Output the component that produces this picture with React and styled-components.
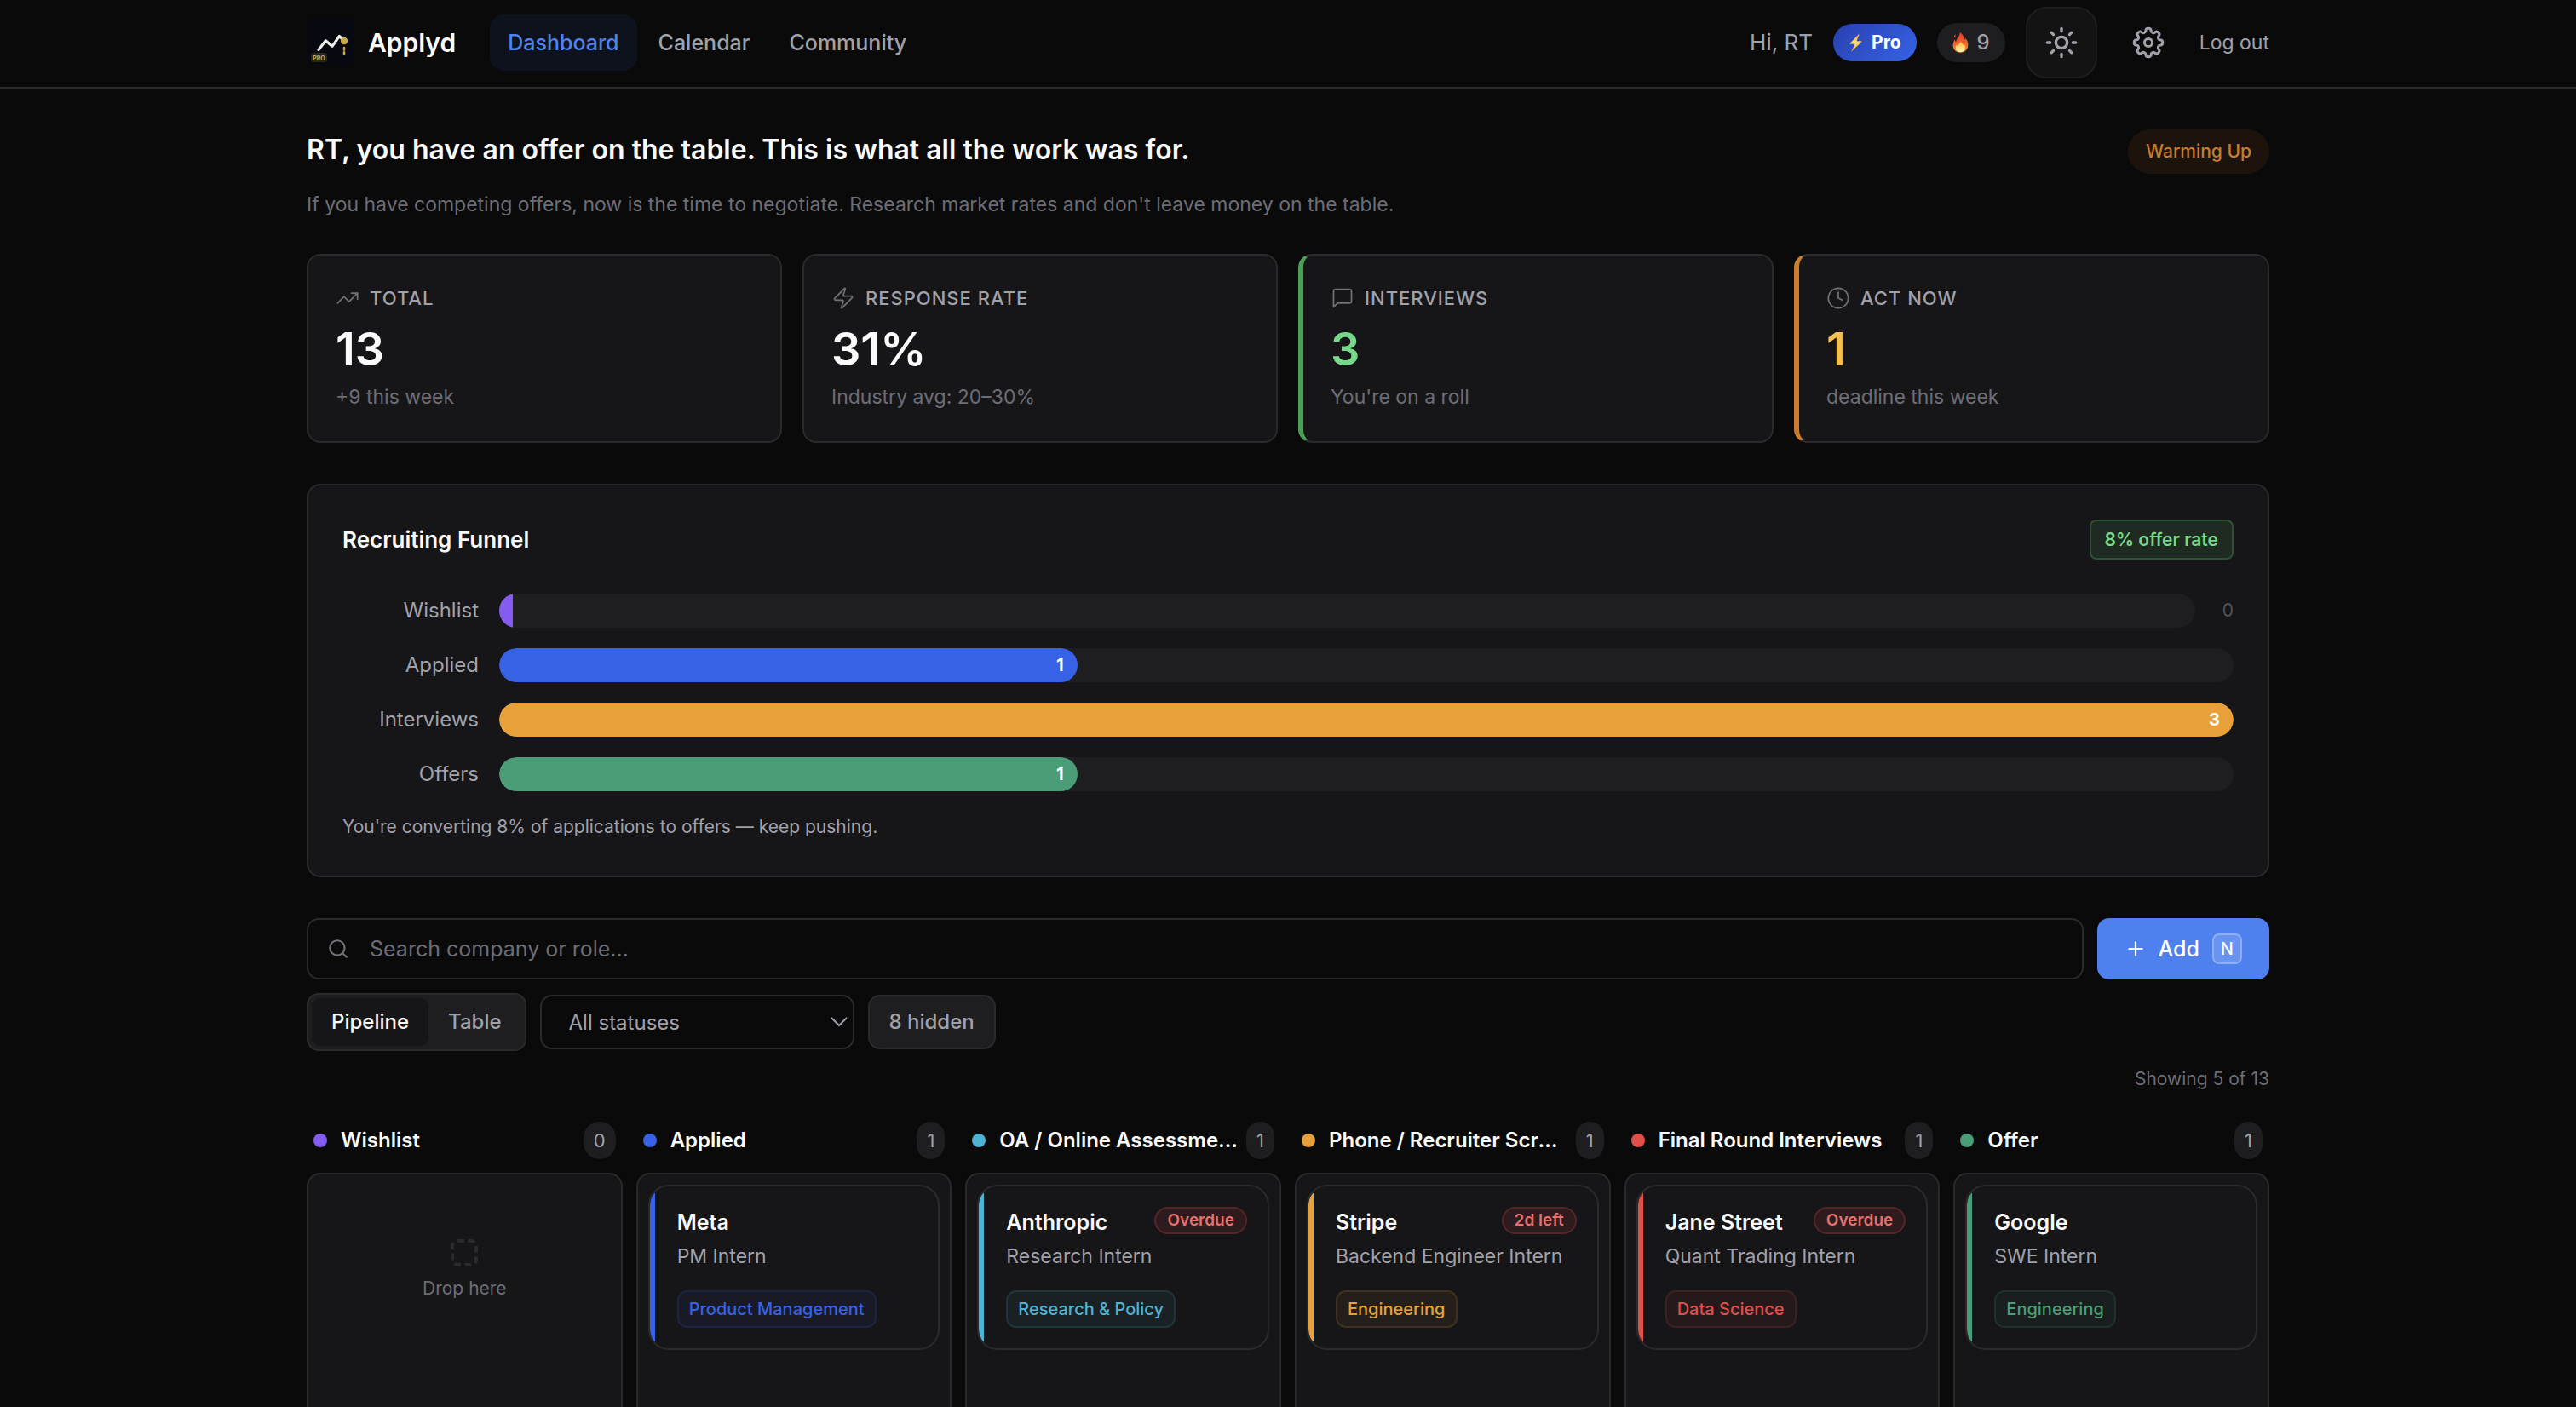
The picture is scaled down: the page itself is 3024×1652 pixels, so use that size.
import React, { useState } from 'react';
import styled, { createGlobalStyle, css } from 'styled-components'
import { Sun, TrendingUp, Zap, Clock, Plus, Search } from 'lucide-react'
import { FiMessageSquare } from 'react-icons/fi'

const GlobalStyle = createGlobalStyle`
    * {
        box-sizing: border-box;
    }

    body {
        margin: 0;
        background: #0a0a0a;
        color: #fafafa;
        font-family: Inter, "Liberation Sans", sans-serif;
        font-size: 24px;
        line-height: 32px;
        overflow-x: hidden;
        scrollbar-width: none;
    }

    button, input, select {
        font-family: inherit;
        margin: 0;
    }

    h1, h2, h3, p, ul {
        margin: 0;
        padding: 0;
    }
`

const Container = styled.div`
    max-width: 2400px;
    margin: 0 auto;
    padding: 0 48px;
`

const Header = styled.header`
    border-bottom: 2px solid #2a2a2c;
`

const HeaderInner = styled(Container)`
    display: flex;
    align-items: center;
    justify-content: space-between;
    padding-top: 8px;
    padding-bottom: 10px;
`

const HeaderGroup = styled.div`
    display: flex;
    align-items: center;
    gap: ${props => props.$gap}px;
`

const Brand = styled.a`
    display: flex;
    align-items: center;
    gap: 16px;
    color: #fafafa;
    font-size: 30px;
    font-weight: 600;
    text-decoration: none;
`

const Nav = styled.nav`
    display: flex;
    gap: 4px;
`

const NavLink = styled.a`
    padding: 17px 21px;
    border-radius: 16px;
    font-size: 25px;
    font-weight: 500;
    text-decoration: none;
    color: ${props => props.$active ? '#4f83ee' : '#a1a1aa'};
    background: ${props => props.$active ? '#0d121d' : 'transparent'};
`

const Greeting = styled.span`
    font-size: 26px;
    color: #a1a1aa;
`

const pill = css`
    display: inline-flex;
    align-items: center;
    border-radius: 999px;
    white-space: nowrap;
`

const ProBadge = styled.span`
    ${pill}
    gap: 10px;
    padding: 6px 18px;
    background: linear-gradient(135deg, #2940b0, #3663e6);
    color: #fff;
    font-size: 21px;
    font-weight: 700;
`

const Streak = styled.span`
    ${pill}
    gap: 10px;
    padding: 7px 18px;
    background: #1e1e20;
    color: #a1a1aa;
    font-size: 24px;
    font-weight: 500;
`

const IconButton = styled.button`
    display: flex;
    align-items: center;
    justify-content: center;
    padding: ${props => props.$framed ? '20px' : '16px'};
    border: ${props => props.$framed ? '2px solid #1e1e20' : '0'};
    border-radius: 24px;
    background: ${props => props.$framed ? '#131314' : 'transparent'};
    color: #a1a1aa;
    cursor: pointer;
`

const LogOut = styled.button`
    padding: 0;
    border: 0;
    background: none;
    color: #a1a1aa;
    font-size: 23px;
    line-height: 32px;
    cursor: pointer;
`

const Main = styled(Container).attrs({ as: 'main' })`
    padding-top: 48px;
`

const Intro = styled.section`
    display: flex;
    align-items: flex-start;
    justify-content: space-between;
    margin-bottom: 42px;
`

const Headline = styled.h1`
    margin-bottom: 24px;
    font-size: 32px;
    font-weight: 600;
    line-height: 48px;
`

const Advice = styled.p`
    font-size: 23px;
    color: #6d6d75;
`

const Momentum = styled.span`
    ${pill}
    padding: 10px 21px;
    background: #1c140c;
    color: #c97b2e;
    font-size: 21px;
    font-weight: 500;
`

const Stats = styled.section`
    display: grid;
    grid-template-columns: repeat(4, 1fr);
    gap: 24px;
    margin-bottom: 48px;
`

const StatCard = styled.article`
    padding: 34px 32px 36px;
    border: 2px solid #2a2a2c;
    border-radius: 16px;
    background: #161618;
    ${props => props.$accent && css`
        border-left: 6px solid ${props.$accent};
    `}
`

const StatLabel = styled.h2`
    display: flex;
    align-items: center;
    gap: 12px;
    color: #a1a1aa;
    font-size: 22px;
    font-weight: 500;
    letter-spacing: 1px;
    text-transform: uppercase;

    svg {
        color: #71717a;
    }
`

const StatValue = styled.p`
    margin: 12px 0 8px;
    color: ${props => props.$color || '#fafafa'};
    font-size: 54px;
    font-weight: 600;
    line-height: 64px;
`

const StatNote = styled.p`
    color: #6d6d75;
    font-size: 23px;
`

const FunnelCard = styled.section`
    margin-bottom: 48px;
    padding: 40px;
    border: 2px solid #2a2a2c;
    border-radius: 16px;
    background: #161618;
`

const FunnelHead = styled.div`
    display: flex;
    align-items: center;
    justify-content: space-between;
    margin-bottom: 40px;
`

const FunnelTitle = styled.h2`
    font-size: 26px;
    font-weight: 600;
`

const OfferRate = styled.span`
    padding: 6px 16px;
    border: 2px solid #2c5133;
    border-radius: 8px;
    background: #1f2a22;
    color: #76d989;
    font-size: 21px;
    font-weight: 600;
    line-height: 31px;
`

const FunnelRows = styled.div`
    display: flex;
    flex-direction: column;
    gap: 24px;
`

const FunnelRow = styled.div`
    display: flex;
    align-items: center;
    gap: 24px;
`

const FunnelLabel = styled.span`
    width: 160px;
    color: #a1a1aa;
    font-size: 24px;
    text-align: right;
`

const Track = styled.div`
    flex: 1;
    height: 40px;
    border-radius: 20px;
    background: #1e1e20;
    overflow: hidden;
`

const Fill = styled.div`
    display: flex;
    align-items: center;
    justify-content: flex-end;
    min-width: 16px;
    height: 100%;
    padding-right: ${props => props.$empty ? 0 : 16}px;
    border-radius: ${props => props.$empty ? 0 : 20}px;
    background: ${props => props.$color};
    color: #fff;
    font-size: 20px;
    font-weight: 700;
`

const EmptyCount = styled.span`
    width: 21px;
    color: #52525b;
    font-size: 21px;
    text-align: right;
`

const FunnelNote = styled.p`
    margin: 26px 0 1px;
    color: #a1a1aa;
    font-size: 21px;
`

const SearchRow = styled.form`
    display: flex;
    gap: 16px;
    margin-bottom: 16px;
`

const SearchBox = styled.label`
    display: flex;
    flex: 1;
    align-items: center;
    gap: 24px;
    padding: 0 22px;
    border: 2px solid #2a2a2c;
    border-radius: 14px;
    color: #71717a;
`

const SearchInput = styled.input`
    flex: 1;
    height: 68px;
    padding: 0;
    border: 0;
    outline: 0;
    background: none;
    color: #fafafa;
    font-size: 25px;

    &::placeholder {
        color: #6d6d75;
    }
`

const AddButton = styled.button`
    display: flex;
    align-items: center;
    gap: 13px;
    padding: 0 32px;
    border: 0;
    border-radius: 14px;
    background: #4e80ee;
    color: #fff;
    font-size: 25px;
    font-weight: 500;
    cursor: pointer;
`

const Kbd = styled.kbd`
    margin-left: 2px;
    padding: 0 8px;
    border: 2px solid #8eaff5;
    border-radius: 8px;
    background: #6893f1;
    font-family: inherit;
    font-size: 20px;
    line-height: 32px;
`

const Toolbar = styled.div`
    display: flex;
    align-items: center;
    gap: 16px;
`

const Segmented = styled.div`
    display: flex;
    padding: 4px;
    border: 2px solid #2a2a2c;
    border-radius: 14px;
    background: #1e1e20;
`

const Segment = styled.button`
    padding: 12px 23px;
    border: 0;
    border-radius: 10px;
    background: ${props => props.$active ? '#161618' : 'transparent'};
    color: ${props => props.$active ? '#fafafa' : '#a1a1aa'};
    font-size: 24px;
    font-weight: 500;
    line-height: 32px;
    cursor: pointer;
`

const SelectWrap = styled.div`
    display: grid;
    align-items: center;
    width: 369px;

    > * {
        grid-area: 1 / 1;
    }

    svg {
        justify-self: end;
        margin-right: 8px;
        pointer-events: none;
    }
`

const StatusSelect = styled.select`
    appearance: none;
    height: 64px;
    padding: 0 32px;
    border: 2px solid #2a2a2c;
    border-radius: 14px;
    background: #0a0a0a;
    color: #a1a1aa;
    font-size: 24px;
`

const HiddenButton = styled.button`
    padding: 14px 23px;
    border: 2px solid #2a2a2c;
    border-radius: 14px;
    background: #1e1e20;
    color: #a1a1aa;
    font-size: 24px;
    font-weight: 500;
    line-height: 32px;
    cursor: pointer;
`

const Showing = styled.p`
    margin: 17px 0 34px;
    color: #6d6d75;
    font-size: 21px;
    text-align: right;
`

const Board = styled.section`
    display: grid;
    grid-template-columns: repeat(6, minmax(0, 1fr));
    gap: 16px;
`

const ColumnHead = styled.div`
    display: flex;
    align-items: center;
    gap: 8px;
    margin-bottom: 16px;
    padding: 0 8px;
`

const Dot = styled.span`
    flex: none;
    width: 16px;
    height: 16px;
    margin-right: 8px;
    border-radius: 50%;
    background: ${props => props.$color};
`

const ColumnTitle = styled.h2`
    flex: 1;
    overflow: hidden;
    font-size: 24px;
    font-weight: 600;
    text-overflow: ellipsis;
    white-space: nowrap;
`

const ColumnCount = styled.span`
    padding: 6px 12px;
    border-radius: 999px;
    background: #1e1e20;
    color: #a1a1aa;
    font-size: 22px;
`

const ColumnBody = styled.div`
    min-height: 320px;
    padding: 12px;
    border: 2px solid #2a2a2c;
    border-radius: 16px;
    background: #161618;
`

const DropZone = styled.div`
    display: flex;
    flex-direction: column;
    align-items: center;
    gap: 10px;
    padding-top: 64px;
    color: #6d6d75;
    font-size: 21px;
`

const DropMark = styled.span`
    width: 32px;
    height: 32px;
    border: 4px dashed #2a2a2c;
    border-radius: 8px;
`

// the coloured stripe is a background so the rounded border clips it
const JobCard = styled.article`
    padding: 24px 24px 24px 32px;
    border: 2px solid #2a2a2c;
    border-radius: 24px;
    background: linear-gradient(${props => props.$color}, ${props => props.$color}) 0 0 / 6px 100% no-repeat padding-box, #161618;
`

const JobHead = styled.div`
    display: flex;
    align-items: flex-start;
    justify-content: space-between;
    gap: 12px;
`

const Company = styled.h3`
    font-size: 25px;
    font-weight: 600;
    line-height: 36px;
    white-space: nowrap;
`

const Deadline = styled.span`
    ${pill}
    padding: 0 13px;
    border: 2px solid #592427;
    background: #2d1b1d;
    color: #e4716e;
    font-size: 19px;
    font-weight: 600;
    line-height: 28px;
`

const Role = styled.p`
    margin: 6px 0 24px;
    color: #a1a1aa;
    font-size: 23px;
    white-space: nowrap;
`

const Tag = styled.span`
    display: inline-block;
    padding: 6px 12px;
    border: 2px solid ${props => props.$color}33;
    border-radius: 12px;
    background: ${props => props.$color}12;
    background-clip: padding-box;
    color: ${props => props.$color};
    font-size: 20px;
    font-weight: 500;
    line-height: 28px;
    vertical-align: top;
    white-space: nowrap;
`

const funnel = [
    { label: 'Wishlist', count: 0, color: '#855cf0' },
    { label: 'Applied', count: 1, color: '#3762e5' },
    { label: 'Interviews', count: 3, color: '#e8a13a' },
    { label: 'Offers', count: 1, color: '#4b9d78' }
]

const columns = [
    { title: 'Wishlist', color: '#855cf0', jobs: [] },
    {
        title: 'Applied',
        color: '#3762e5',
        jobs: [{ company: 'Meta', role: 'PM Intern', tag: 'Product Management' }]
    },
    {
        title: 'OA / Online Assessments',
        color: '#4fb3d3',
        jobs: [{ company: 'Anthropic', role: 'Research Intern', tag: 'Research & Policy', deadline: 'Overdue' }]
    },
    {
        title: 'Phone / Recruiter Screen',
        color: '#e8a13a',
        jobs: [{ company: 'Stripe', role: 'Backend Engineer Intern', tag: 'Engineering', deadline: '2d left' }]
    },
    {
        title: 'Final Round Interviews',
        color: '#e0504b',
        jobs: [{ company: 'Jane Street', role: 'Quant Trading Intern', tag: 'Data Science', deadline: 'Overdue' }]
    },
    {
        title: 'Offer',
        color: '#4b9d78',
        jobs: [{ company: 'Google', role: 'SWE Intern', tag: 'Engineering' }]
    }
]

const Logo = () => (
    <svg width="56" height="56" viewBox="0 0 56 56" aria-hidden="true">
        <rect width="56" height="56" rx="12" fill="#080810" />
        <path d="M14 36.5 22.3 25.7 30 32.3 38.3 20.5 43 25" fill="none" stroke="#ececec" strokeWidth="3.2" strokeLinecap="round" strokeLinejoin="round" />
        <circle cx="44" cy="26" r="4.2" fill="#c9a84c" />
        <path d="M44 34v2.4M44 39.4v1.6" stroke="#c9a84c" strokeWidth="2.6" strokeLinecap="round" />
        <rect x="5" y="40" width="19" height="11" rx="3" fill="#29241c" />
        <text x="14.5" y="48.6" fill="#c9a84c" fontSize="7" fontWeight="700" textAnchor="middle">PRO</text>
    </svg>
)

const Bolt = () => (
    <svg width="17" height="22" viewBox="0 0 18 24" aria-hidden="true">
        <defs>
            <linearGradient id="bolt" x1="0" y1="0" x2="0" y2="1">
                <stop offset="0" stopColor="#f6a632" />
                <stop offset="0.5" stopColor="#ffe27a" />
                <stop offset="1" stopColor="#f3a22e" />
            </linearGradient>
        </defs>
        <path d="M14 0 1 13.5l7 .3L3 24 17 10.300l-7-.3z" fill="url(#bolt)" />
    </svg>
)

const Flame = () => (
    <svg width="19" height="24" viewBox="0 0 20 26" aria-hidden="true">
        <defs>
            <linearGradient id="flame" x1="0" y1="0" x2="0" y2="1">
                <stop offset="0" stopColor="#e2392b" />
                <stop offset="0.55" stopColor="#f4642c" />
                <stop offset="1" stopColor="#fb9a35" />
            </linearGradient>
            <linearGradient id="flameCore" x1="0" y1="0" x2="0" y2="1">
                <stop offset="0" stopColor="#fdb63c" />
                <stop offset="1" stopColor="#fff7b0" />
            </linearGradient>
        </defs>
        <path d="M9 0c5 3 5.500 6.500 5.200 10 1-.6 1.500-1.800 1.600-3C18.500 9.500 20 13 19.500 17c-.6 5-4.500 8.600-9.600 8.600C4.500 25.600.6 22 .4 17 .3 13.500 1.500 11 2.600 9c.3 1.600.8 2.600 1.800 3.200C4.300 8 9.500 5.500 9 0z" fill="url(#flame)" />
        <path d="M1.800 5.500c.2-1.400.9-2.400 2-3-.2 1.500.2 2.500-.5 4-.6 1-1.600.4-1.500-1z" fill="#e2392b" />
        <path d="M10.500 11c.3 3 3 4 3.300 6 .6-.4.9-1 1-1.800 2.600 4 .8 9.800-4.800 9.800-5.500 0-7.400-5-5-9.300.3 1 .8 1.600 1.500 1.900C6.700 14.500 10 14 10.500 11z" fill="url(#flameCore)" />
    </svg>
)

// eight rounded teeth, every corner smoothed with a quadratic curve
const gearPath = () => {
    const corners = []
    for (let tooth = 0; tooth < 8; tooth++) {
        [[17, -10], [17, 10], [12.6, 14], [12.6, 31]].forEach(([radius, offset]) => {
            const angle = (tooth * 45 + offset) * Math.PI / 180
            corners.push([20 + radius * Math.sin(angle), 20 - radius * Math.cos(angle)])
        })
    }
    const middle = (a, b) => `${(a[0] + b[0]) / 2} ${(a[1] + b[1]) / 2}`
    const curves = corners.map((corner, i) => {
        return `Q${corner[0]} ${corner[1]} ${middle(corner, corners[(i + 1) % corners.length])}`
    })
    return `M${middle(corners[corners.length - 1], corners[0])}${curves.join('')}Z`
}

const Gear = () => (
    <svg width="40" height="40" viewBox="0 0 40 40" fill="none" stroke="currentColor" strokeWidth="3" aria-hidden="true">
        <path d={gearPath()} />
        <circle cx="20" cy="20" r="4.6" />
    </svg>
)

const Chevron = () => (
    <svg width="20" height="12" viewBox="0 0 20 12" fill="none" stroke="#a1a1aa" strokeWidth="2" aria-hidden="true">
        <path d="M1 1l9 9 9-9" />
    </svg>
)

const App = () => {
    const [view, setView] = useState('Pipeline')
    const [search, setSearch] = useState('')
    const maxCount = Math.max(...funnel.map(stage => stage.count))

    return (
        <>
            <GlobalStyle />
            <Header>
                <HeaderInner>
                    <HeaderGroup $gap={40}>
                        <Brand href="#">
                            <Logo />
                            Applyd
                        </Brand>
                        <Nav>
                            <NavLink href="#dashboard" $active>Dashboard</NavLink>
                            <NavLink href="#calendar">Calendar</NavLink>
                            <NavLink href="#community">Community</NavLink>
                        </Nav>
                    </HeaderGroup>
                    <HeaderGroup $gap={24}>
                        <Greeting>Hi, RT</Greeting>
                        <ProBadge><Bolt />Pro</ProBadge>
                        <Streak><Flame />9</Streak>
                        <IconButton $framed aria-label="Toggle theme">
                            <Sun size={40} strokeWidth={2} />
                        </IconButton>
                        <IconButton aria-label="Settings">
                            <Gear />
                        </IconButton>
                        <LogOut>Log out</LogOut>
                    </HeaderGroup>
                </HeaderInner>
            </Header>
            <Main>
                <Intro>
                    <div>
                        <Headline>RT, you have an offer on the table. This is what all the work was for.</Headline>
                        <Advice>If you have competing offers, now is the time to negotiate. Research market rates and don't leave money on the table.</Advice>
                    </div>
                    <Momentum>Warming Up</Momentum>
                </Intro>
                <Stats>
                    <StatCard>
                        <StatLabel><TrendingUp size={28} strokeWidth={1.5} />Total</StatLabel>
                        <StatValue>13</StatValue>
                        <StatNote>+9 this week</StatNote>
                    </StatCard>
                    <StatCard>
                        <StatLabel><Zap size={28} strokeWidth={1.5} />Response Rate</StatLabel>
                        <StatValue>31%</StatValue>
                        <StatNote>Industry avg: 20–30%</StatNote>
                    </StatCard>
                    <StatCard $accent="#4c9f57">
                        <StatLabel><FiMessageSquare size={28} strokeWidth={1.5} />Interviews</StatLabel>
                        <StatValue $color="#76d989">3</StatValue>
                        <StatNote>You're on a roll</StatNote>
                    </StatCard>
                    <StatCard $accent="#cb7c2f">
                        <StatLabel><Clock size={28} strokeWidth={1.5} />Act Now</StatLabel>
                        <StatValue $color="#f5c04e">1</StatValue>
                        <StatNote>deadline this week</StatNote>
                    </StatCard>
                </Stats>
                <FunnelCard>
                    <FunnelHead>
                        <FunnelTitle>Recruiting Funnel</FunnelTitle>
                        <OfferRate>8% offer rate</OfferRate>
                    </FunnelHead>
                    <FunnelRows>
                        {
                            funnel.map(stage => {
                                return (
                                    <FunnelRow key={stage.label}>
                                        <FunnelLabel>{stage.label}</FunnelLabel>
                                        <Track>
                                            <Fill
                                                $color={stage.color}
                                                $empty={stage.count === 0}
                                                style={{ width: `${stage.count / maxCount * 100}%` }}
                                            >
                                                {stage.count > 0 ? stage.count : null}
                                            </Fill>
                                        </Track>
                                        {stage.count === 0 ? <EmptyCount>0</EmptyCount> : null}
                                    </FunnelRow>
                                )
                            })
                        }
                    </FunnelRows>
                    <FunnelNote>You're converting 8% of applications to offers — keep pushing.</FunnelNote>
                </FunnelCard>
                <SearchRow onSubmit={e => e.preventDefault()}>
                    <SearchBox htmlFor="search">
                        <Search size={26} strokeWidth={2} />
                        <SearchInput
                            id="search"
                            type="text"
                            aria-label="Search company or role"
                            placeholder="Search company or role…"
                            value={search}
                            onChange={e => setSearch(e.target.value)}
                        />
                    </SearchBox>
                    <AddButton type="button">
                        <Plus size={26} strokeWidth={2} />
                        Add
                        <Kbd>N</Kbd>
                    </AddButton>
                </SearchRow>
                <Toolbar>
                    <Segmented>
                        {
                            ['Pipeline', 'Table'].map(name => (
                                <Segment key={name} $active={view === name} onClick={() => setView(name)}>{name}</Segment>
                            ))
                        }
                    </Segmented>
                    <SelectWrap>
                        <StatusSelect aria-label="Status">
                            <option>All statuses</option>
                        </StatusSelect>
                        <Chevron />
                    </SelectWrap>
                    <HiddenButton>8 hidden</HiddenButton>
                </Toolbar>
                <Showing>Showing 5 of 13</Showing>
                <Board>
                    {
                        columns.map(column => {
                            return (
                                <div key={column.title}>
                                    <ColumnHead>
                                        <Dot $color={column.color} />
                                        <ColumnTitle>{column.title}</ColumnTitle>
                                        <ColumnCount>{column.jobs.length}</ColumnCount>
                                    </ColumnHead>
                                    <ColumnBody>
                                        {
                                            column.jobs.length === 0
                                            ? <DropZone>
                                                <DropMark />
                                                Drop here
                                            </DropZone>
                                            : column.jobs.map(job => (
                                                <JobCard key={job.company} $color={column.color}>
                                                    <JobHead>
                                                        <Company>{job.company}</Company>
                                                        {job.deadline ? <Deadline>{job.deadline}</Deadline> : null}
                                                    </JobHead>
                                                    <Role>{job.role}</Role>
                                                    <Tag $color={column.color}>{job.tag}</Tag>
                                                </JobCard>
                                            ))
                                        }
                                    </ColumnBody>
                                </div>
                            )
                        })
                    }
                </Board>
            </Main>
        </>
    );
}

export default App;
